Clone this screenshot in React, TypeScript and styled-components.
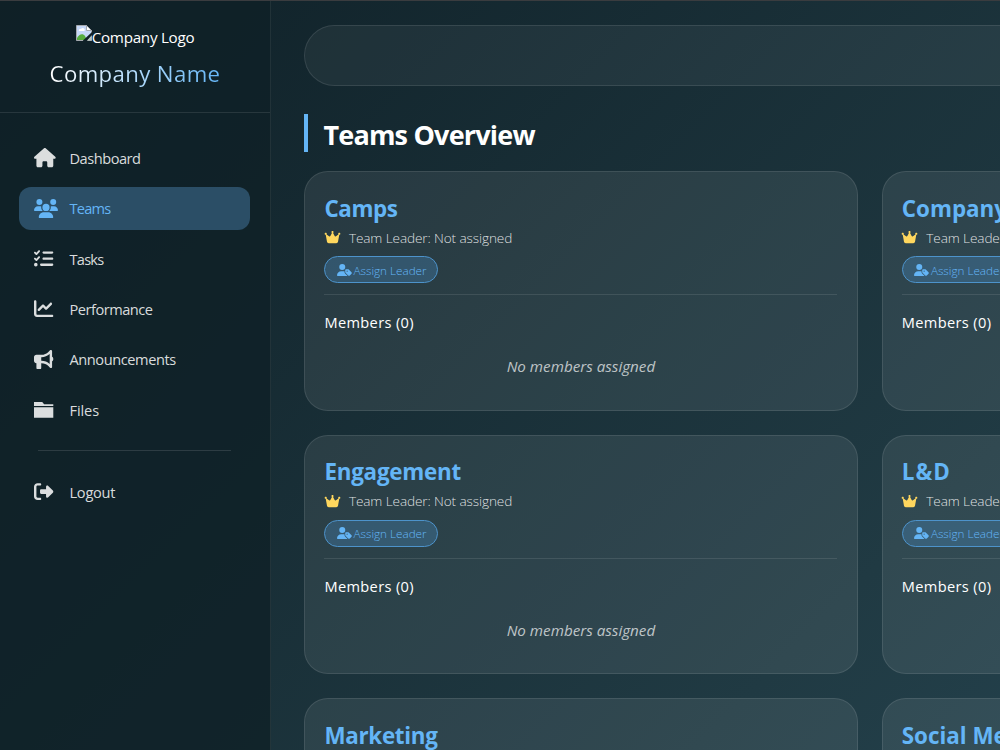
import React from "react";
import styled, { createGlobalStyle } from "styled-components";
import {
  FaHouse,
  FaUsers,
  FaListCheck,
  FaChartLine,
  FaBullhorn,
  FaRightFromBracket,
  FaCrown,
  FaUserTag,
} from "react-icons/fa6";

const GlobalStyle = createGlobalStyle`
  *, *::before, *::after { box-sizing: border-box; }
  html, body { margin: 0; height: 100%; overflow: hidden; }
  body { font-family: "Open Sans", "Noto Sans", sans-serif; color: #fff; }
`;

const Page = styled.div`
  display: flex;
  width: 100vw;
  height: 100vh;
  overflow: hidden;
  border-top: 1px solid #3a3c3f;
  background: linear-gradient(135deg, #0f2027 0px, #203a43 1020px, #2c5364 2040px);
`;

const Sidebar = styled.aside`
  flex: 0 0 271px;
  height: 100%;
  background: rgba(15, 32, 39, 0.8);
  border-right: 1px solid rgba(255, 255, 255, 0.08);
`;

const Brand = styled.div`
  height: 112px;
  padding-top: 23px;
  display: flex;
  flex-direction: column;
  align-items: center;
  border-bottom: 1px solid rgba(255, 255, 255, 0.1);
`;

const Logo = styled.div`
  display: flex;
  align-items: flex-start;
  height: 28px;
  font-size: 15.2px;
  line-height: 26px;
  white-space: nowrap;
  svg { margin-top: 1px; flex: none; }
`;

const BrandName = styled.div`
  margin-top: 7px;
  font-size: 22.2px;
  font-weight: 500;
  line-height: 30px;
  white-space: nowrap;
  background: linear-gradient(90deg, #fff, #64b5f6);
  -webkit-background-clip: text;
  background-clip: text;
  color: transparent;
`;

const Label = styled.span<{ $track?: number }>`
  letter-spacing: ${(p) => p.$track ?? 0}px;
`;

const Nav = styled.nav`
  display: flex;
  flex-direction: column;
  gap: 7.8px;
  padding: 23.9px 20px 0 19.3px;
`;

const NavItem = styled.a<{ $active?: boolean }>`
  display: flex;
  align-items: center;
  height: 42.5px;
  padding-left: 15.1px;
  border-radius: 12px;
  font-size: 14.6px;
  white-space: nowrap;
  color: ${(p) => (p.$active ? "#64b5f6" : "rgba(255,255,255,0.85)")};
  background: ${(p) => (p.$active ? "#2b4e66" : "transparent")};
`;

const NavIcon = styled.span<{ $w?: number }>`
  display: flex;
  flex: 0 0 35.1px;
  svg { display: block; flex: none; height: 19.3px; width: ${(p) => p.$w ?? 19.3}px; }
`;

const Divider = styled.hr`
  width: 193px;
  height: 1px;
  margin: 11.7px auto 11.7px;
  border: 0;
  background: rgba(255, 255, 255, 0.12);
`;

const Main = styled.main`
  flex: 0 0 1200px;
  padding: 24px 35px 0 33.4px;
`;

const TopBar = styled.div`
  height: 61px;
  border: 1px solid rgba(255, 255, 255, 0.1);
  border-radius: 31px;
  background: rgba(255, 255, 255, 0.05);
`;

const Heading = styled.h1`
  display: flex;
  align-items: center;
  height: 38px;
  margin: 28px 0 19px;
  padding: 3px 0 0 15px;
  border-left: 4px solid #64b5f6;
  font-size: 27px;
  font-weight: 700;
  line-height: 35px;
`;

const Grid = styled.section`
  display: grid;
  grid-template-columns: repeat(2, 553.4px);
  grid-auto-rows: 239.6px;
  gap: 24px;
`;

const Card = styled.article`
  display: flex;
  flex-direction: column;
  align-items: stretch;
  padding: 19.3px 19.3px 19.3px 19px;
  border: 1px solid rgba(255, 255, 255, 0.1);
  border-radius: 24px;
  background: rgba(255, 255, 255, 0.08);
  white-space: nowrap;
`;

const TeamName = styled.h2`
  margin: 2.6px 0 0;
  font-size: 22.4px;
  font-weight: 700;
  line-height: 30px;
  color: #64b5f6;
`;

const Leader = styled.div`
  display: flex;
  align-items: center;
  height: 24px;
  margin-top: 1.4px;
  gap: 8px;
  font-size: 13.6px;
  font-weight: 300;
  color: rgba(255, 255, 255, 0.85);
  svg { width: 17px; height: 14px; margin-left: -0.5px; color: #ffd75e; }
`;

const AssignButton = styled.button`
  display: flex;
  align-items: center;
  width: 114px;
  height: 27px;
  margin: 7px 0 0;
  padding: 0 0 0 11.5px;
  gap: 1.6px;
  border: 1px solid #4d93cb;
  border-radius: 14px;
  background: rgba(75, 142, 198, 0.32);
  color: #64b5f6;
  font-family: inherit;
  font-size: 11.7px;
  font-weight: 300;
  white-space: nowrap;
  svg { width: 15px; height: 12px; flex: none; }
`;

const Members = styled.div`
  margin-top: 11px;
  padding-top: 15px;
  border-top: 1px solid rgba(255, 255, 255, 0.1);
`;

const MembersTitle = styled.h3`
  margin: 0;
  font-size: 14.6px;
  font-weight: 500;
  line-height: 24px;
`;

const Empty = styled.p`
  margin: 20px 0 0;
  text-align: center;
  font-size: 15.2px;
  font-style: italic;
  line-height: 24px;
  color: rgba(255, 255, 255, 0.7);
`;

function BrokenImage() {
  return (
    <svg width="16" height="16" viewBox="0 0 16 16">
      <path d="M.5.5h10l5 5v10H.5z" fill="#c6d8f8" stroke="#a5a9ae" />
      <path d="M10.5.5v5h5z" fill="#fff" stroke="#a5a9ae" />
      <path d="M3 6a1.5 1.5 0 0 1 2-2 2 2 0 0 1 3.500 2z" fill="#fff" />
      <path d="M1 15v-2c2-4 6-5 8-2l2 4z" fill="#56ad3e" />
      <path d="M7 15.500 16 7v3l-5 6H7z" fill="#102027" />
      <path d="M11 15.500 15.500 11v4.500z" fill="#b5c6bc" />
    </svg>
  );
}

function FolderIcon() {
  return (
    <svg viewBox="0 0 20 20" fill="currentColor">
      <path d="M0 2h8.500l2 2.300H20v1.900H0zM0 7.400h20V18.300H0z" />
    </svg>
  );
}

const items = [
  { name: "Dashboard", icon: FaHouse, track: -0.47, width: 21.7 },
  { name: "Teams", icon: FaUsers, track: -0.75, width: 24, active: true },
  { name: "Tasks", icon: FaListCheck, track: -0.75 },
  { name: "Performance", icon: FaChartLine, track: -0.48 },
  { name: "Announcements", icon: FaBullhorn, track: -0.42 },
  { name: "Files", icon: FolderIcon, track: -0.1 },
];

const teams = [
  { name: "Camps", track: -0.4 },
  { name: "Company Visits", track: 0 },
  { name: "Engagement", track: -0.23 },
  { name: "L&D", track: 1 },
  { name: "Marketing", track: -0.3 },
  { name: "Social Media", track: 0 },
];

export default function App() {
  return (
    <>
      <GlobalStyle />
      <Page>
        <Sidebar>
          <Brand>
            <Logo>
              <BrokenImage />
              <Label $track={-0.27}>Company Logo</Label>
            </Logo>
            <BrandName>
              <Label $track={0.38}>Company Name</Label>
            </BrandName>
          </Brand>
          <Nav>
            {items.map(({ name, icon: Icon, track, width, active }) => (
              <NavItem key={name} $active={active}>
                <NavIcon $w={width}><Icon /></NavIcon>
                <Label $track={track}>{name}</Label>
              </NavItem>
            ))}
            <Divider />
            <NavItem>
              <NavIcon><FaRightFromBracket /></NavIcon>
              <Label $track={-0.25}>Logout</Label>
            </NavItem>
          </Nav>
        </Sidebar>
        <Main>
          <TopBar />
          <Heading><Label $track={-0.8}>Teams Overview</Label></Heading>
          <Grid>
            {teams.map((t) => (
              <Card key={t.name}>
                <TeamName><Label $track={t.track}>{t.name}</Label></TeamName>
                <Leader>
                  <FaCrown />
                  <Label $track={-0.11}>Team Leader: Not assigned</Label>
                </Leader>
                <AssignButton>
                  <FaUserTag />
                  <Label>Assign Leader</Label>
                </AssignButton>
                <Members>
                  <MembersTitle><Label $track={0.36}>Members (0)</Label></MembersTitle>
                  <Empty><Label>No members assigned</Label></Empty>
                </Members>
              </Card>
            ))}
          </Grid>
        </Main>
      </Page>
    </>
  );
}
